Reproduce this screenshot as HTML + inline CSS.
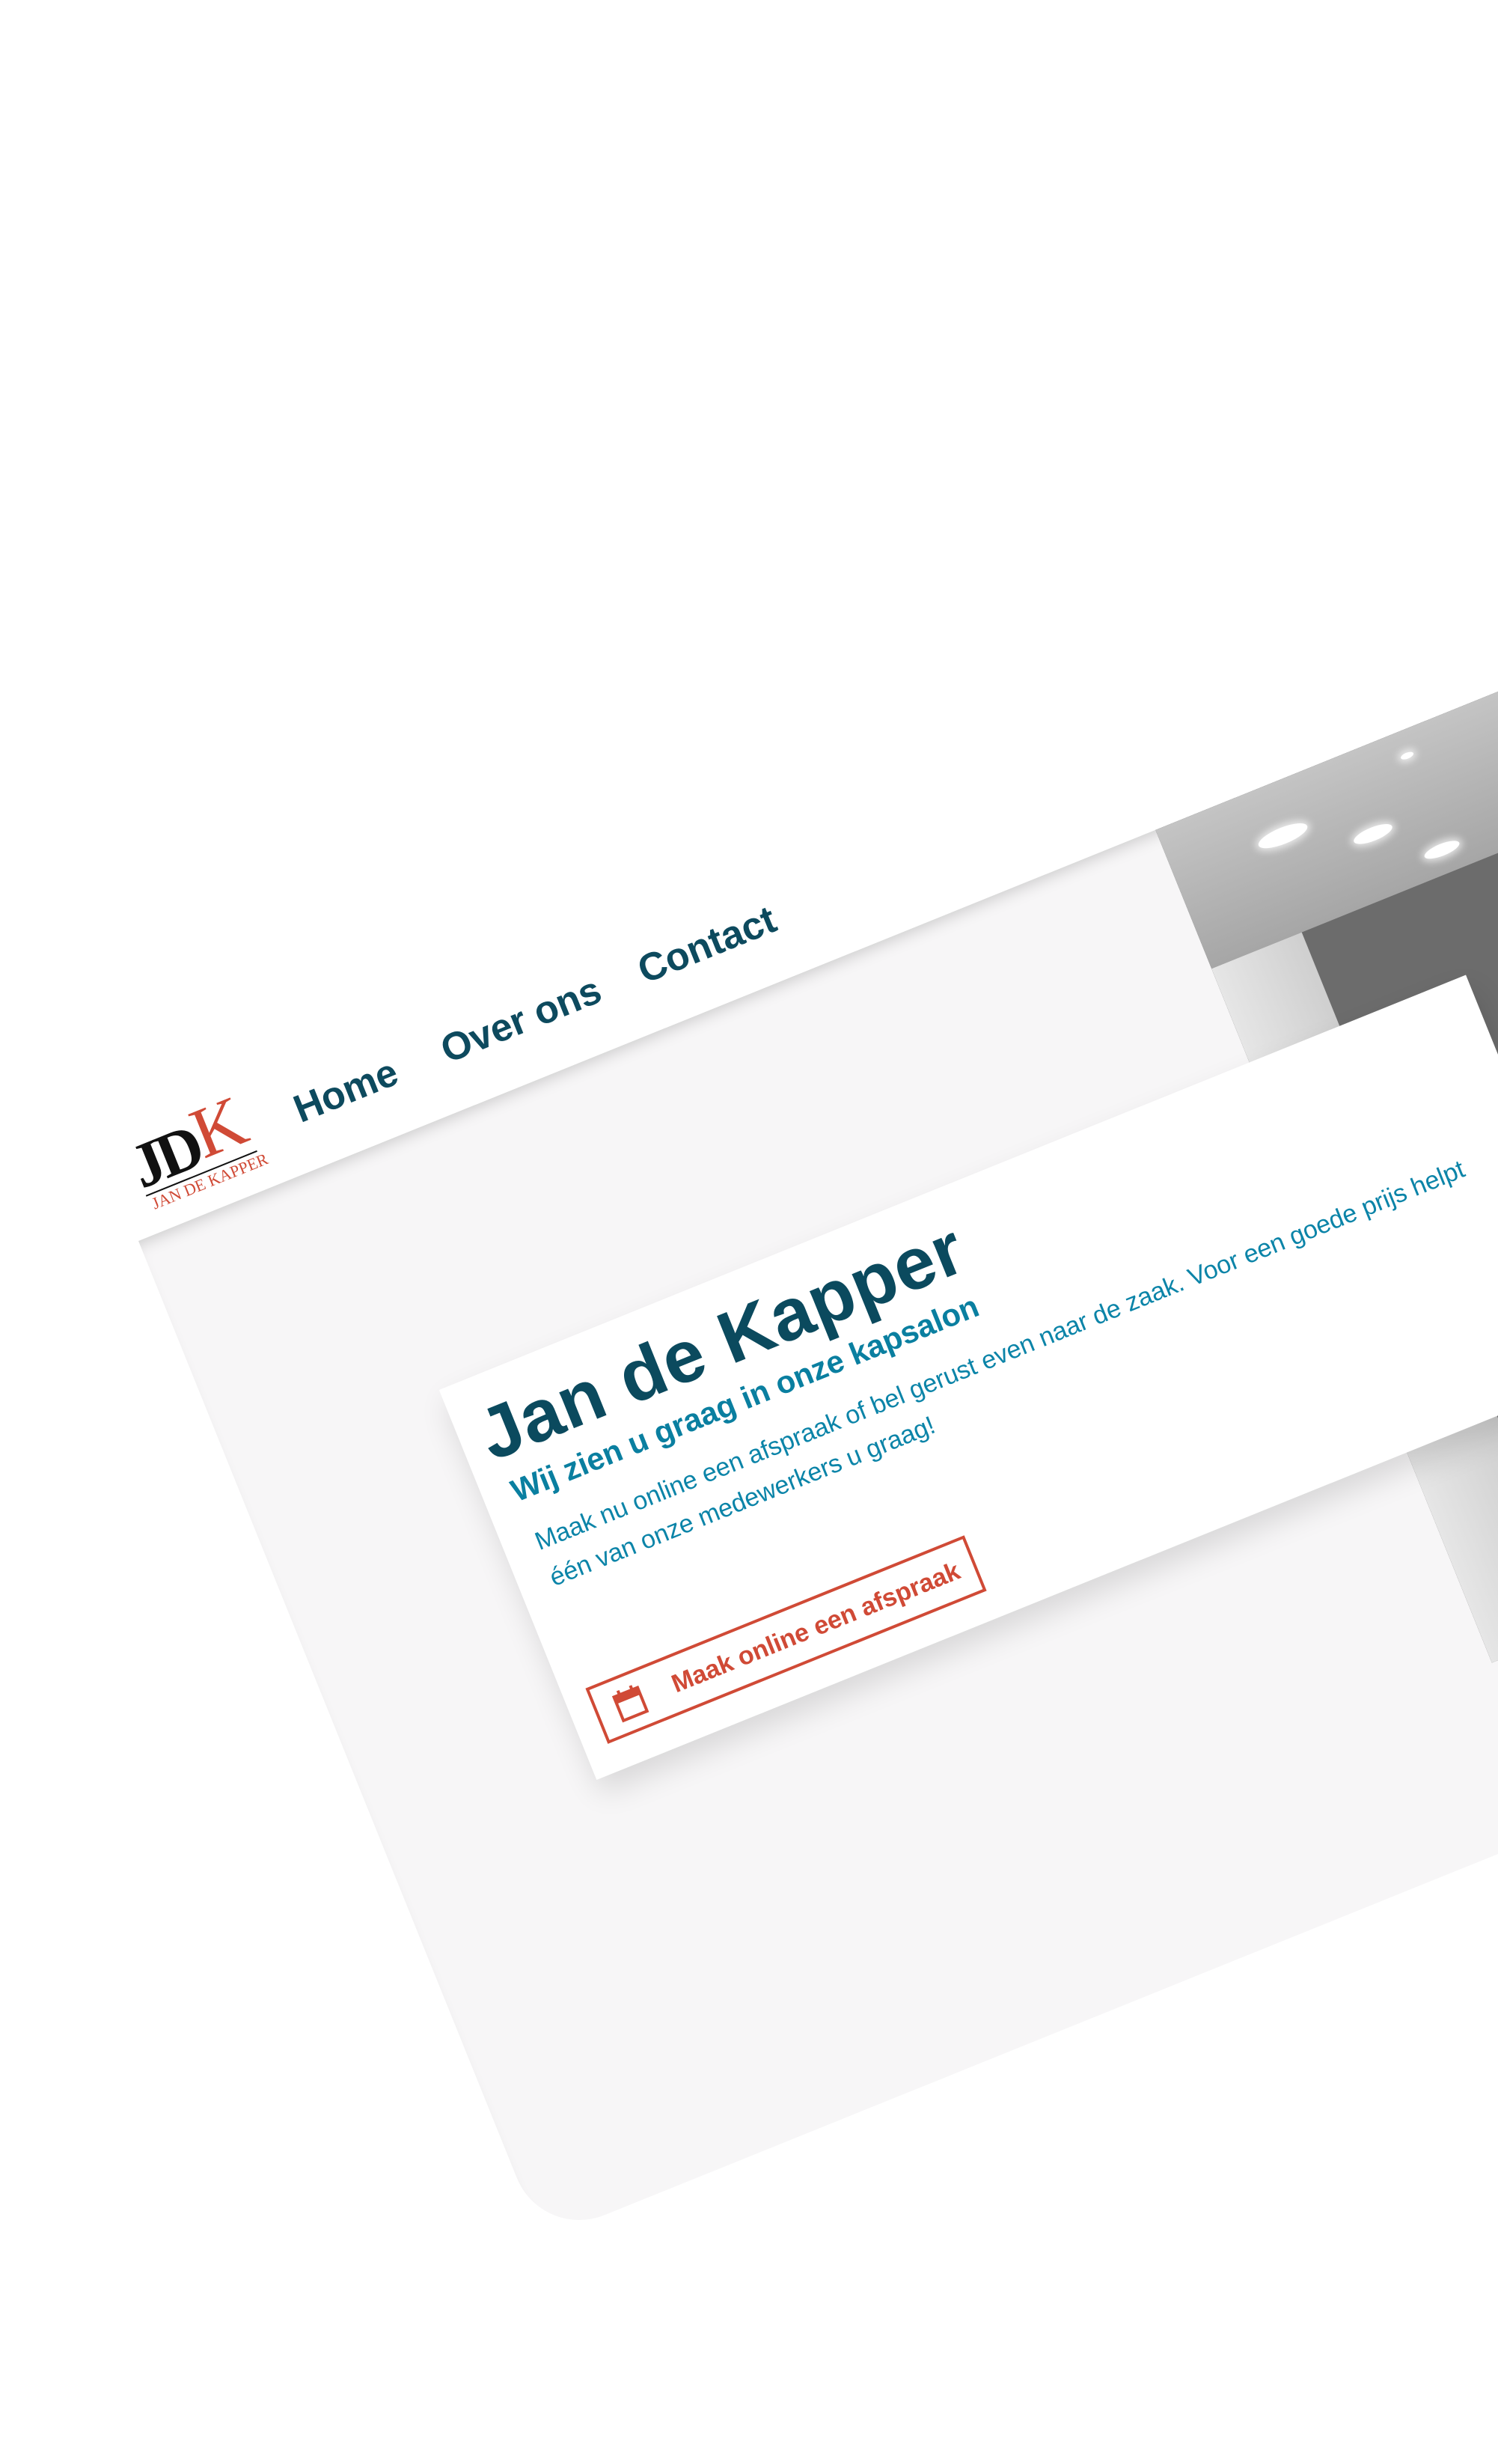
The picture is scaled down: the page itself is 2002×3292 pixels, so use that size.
<!DOCTYPE html>
<html><head><meta charset="utf-8">
<style>
html,body{margin:0;padding:0;}
body{width:2002px;height:3292px;background:#fff;position:relative;overflow:hidden;font-family:"Liberation Sans",sans-serif;}
#c{position:absolute;left:185px;top:1658px;width:0;height:0;transform-origin:0 0;transform:rotate(-22deg);}
#c>div{position:absolute;}
.hdr{left:0;top:-160px;width:2600px;height:160px;background:#fff;}
.bodyb{left:0;top:0;width:2600px;height:1440px;background:#f7f6f7;border-bottom-left-radius:90px;box-shadow:inset 0 18px 22px -14px rgba(0,0,0,.18);}
.img{left:1466px;top:0;width:1100px;height:1200px;overflow:hidden;background:#6c6c6c;}
.img .ceil{position:absolute;left:0;top:0;width:1100px;height:200px;background:linear-gradient(#c4c4c4,#a6a6a6);}
.img .wall{position:absolute;left:0;top:200px;width:130px;height:1000px;background:linear-gradient(90deg,#e6e6e6,#cfcfcf);}
.img .lt{position:absolute;background:#fff;border-radius:50%;box-shadow:0 0 10px 4px rgba(255,255,255,.7);}
.hero{left:298px;top:335px;width:1480px;height:562px;background:#fff;box-shadow:0 20px 40px rgba(0,0,0,.12);}
.nav{top:-112px;font-weight:bold;font-size:52px;color:#0d4a5e;white-space:nowrap;}
h1{position:absolute;left:30px;top:26px;margin:0;font-size:98px;line-height:110px;color:#0b4a5e;font-weight:bold;white-space:nowrap;letter-spacing:1px;}
h2{position:absolute;left:40px;top:140px;margin:0;font-size:42px;color:#0a7fa0;font-weight:bold;white-space:nowrap;}
p{position:absolute;left:44px;top:212px;margin:0;font-size:34px;line-height:52px;color:#0b84a8;white-space:nowrap;}
.btn{position:absolute;left:32px;top:443px;width:546px;height:80px;box-sizing:border-box;border:4px solid #d04a36;color:#d04a36;font-weight:bold;font-size:34px;line-height:72px;white-space:nowrap;}
</style></head><body>
<div id="c">
  <div class="hdr"></div>
  <div class="bodyb"></div>
  <div class="img">
    <div class="ceil"></div>
    <div class="wall"></div>
    <div class="lt" style="left:120px;top:60px;width:70px;height:22px"></div>
    <div class="lt" style="left:240px;top:105px;width:55px;height:18px"></div>
    <div class="lt" style="left:320px;top:160px;width:50px;height:16px"></div>
    <div class="lt" style="left:340px;top:30px;width:18px;height:8px"></div>
  </div>
  <div style="left:30px;top:-135px;width:180px;height:115px;">
    <span style="position:absolute;left:0;top:0;font-family:'Liberation Serif',serif;font-weight:bold;font-size:84px;line-height:90px;color:#111;letter-spacing:-6px;">JD</span>
    <span style="position:absolute;left:92px;top:-16px;font-family:'Liberation Serif',serif;font-size:96px;line-height:100px;color:#d04a36;">K</span>
    <div style="position:absolute;left:2px;top:82px;width:160px;height:2px;background:#111"></div>
    <span style="position:absolute;left:6px;top:84px;font-family:'Liberation Serif',serif;font-size:22px;color:#d04a36;white-space:nowrap;">JAN DE KAPPER</span>
  </div>
  <div class="nav" style="left:260px">Home</div>
  <div class="nav" style="left:472px">Over ons</div>
  <div class="nav" style="left:756px">Contact</div>
  <div class="hero">
    <h1>Jan de Kapper</h1>
    <h2>Wij zien u graag in onze kapsalon</h2>
    <p>Maak nu online een afspraak of bel gerust even naar de zaak. Voor een goede prijs helpt<br>één van onze medewerkers u graag!</p>
    <div class="btn">
      <svg width="40" height="44" viewBox="0 0 40 44" style="position:absolute;left:24px;top:14px"><rect x="3" y="7" width="34" height="34" fill="none" stroke="#d04a36" stroke-width="4"/><rect x="3" y="7" width="34" height="10" fill="#d04a36"/><rect x="9" y="1" width="4" height="8" fill="#d04a36"/><rect x="27" y="1" width="4" height="8" fill="#d04a36"/></svg>
      <span style="position:absolute;left:106px;top:0">Maak online een afspraak</span>
    </div>
  </div>
</div>
</body></html>
